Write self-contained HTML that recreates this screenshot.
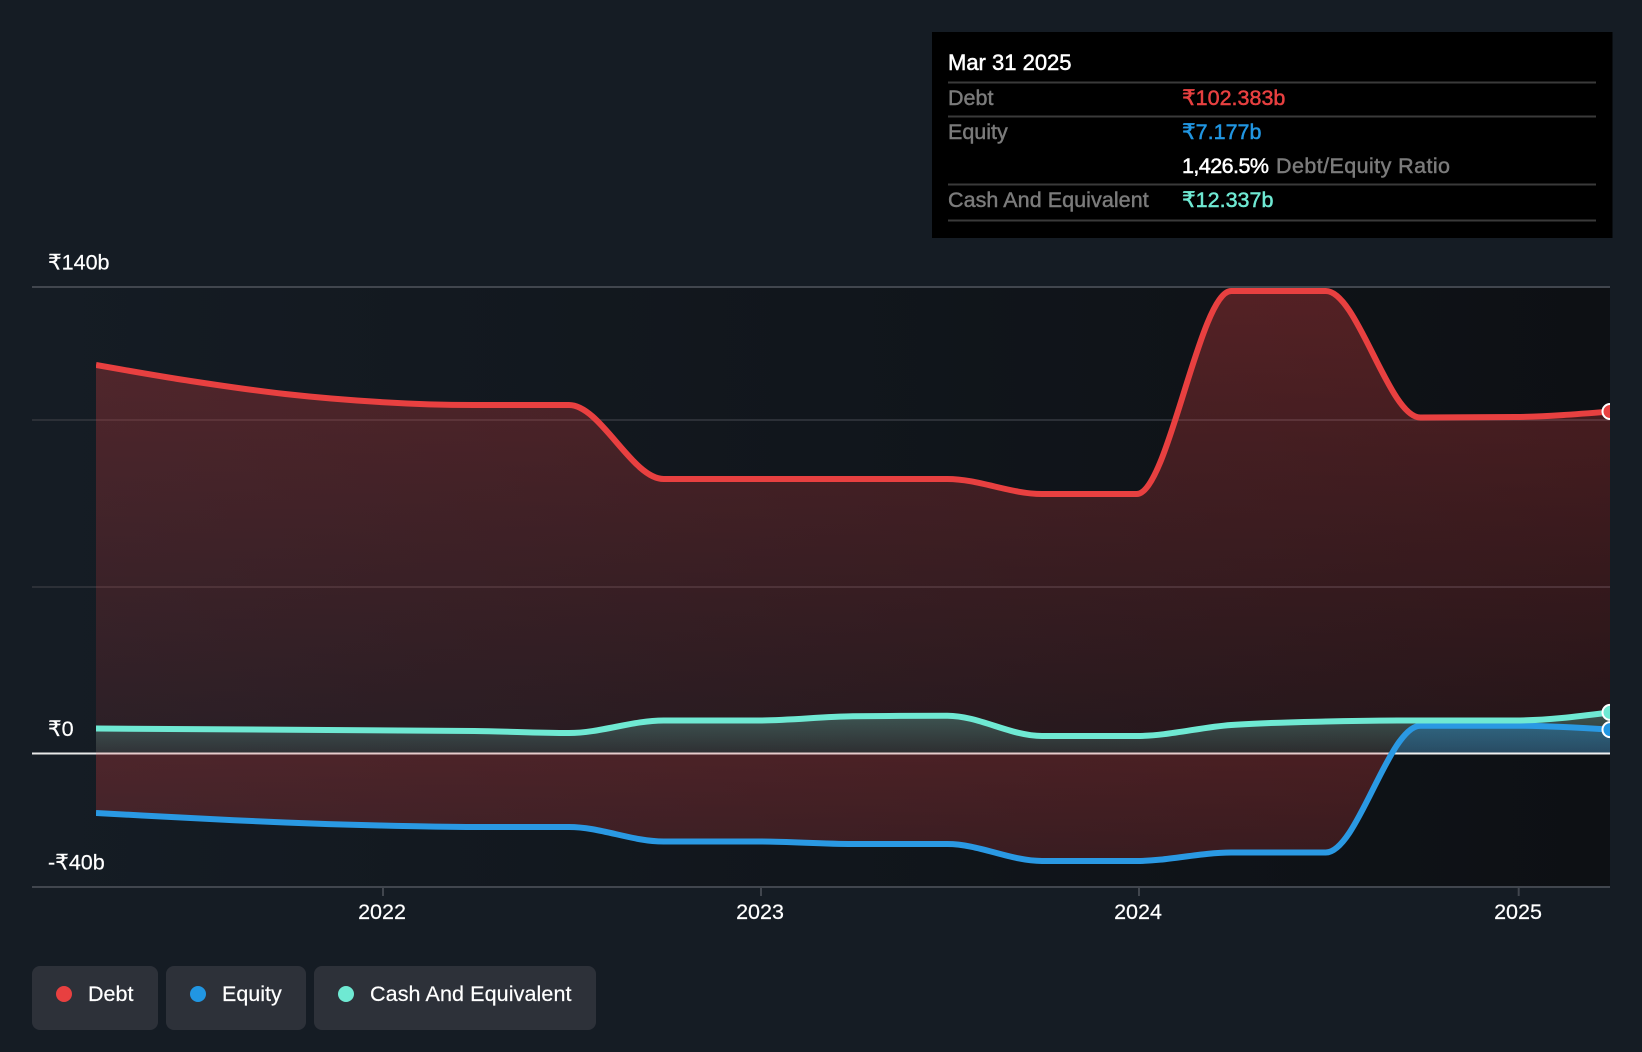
<!DOCTYPE html>
<html><head><meta charset="utf-8"><style>
html,body{margin:0;padding:0;background:#151c24;width:1642px;height:1052px;overflow:hidden}
svg{display:block}
text{font-family:"Liberation Sans","DejaVu Sans",sans-serif;font-size:21.5px;fill:#fff;paint-order:stroke}
.l{stroke:#fff;stroke-width:.2px}
.m{stroke-width:.5px}
.g{fill:#7b7b7b;stroke:#7b7b7b;stroke-width:.45px}
</style></head><body>
<svg width="1642" height="1052" viewBox="0 0 1642 1052" xmlns="http://www.w3.org/2000/svg">
<defs>
<linearGradient id="bgd" x1="0" x2="1" y1="0" y2="0"><stop offset="0" stop-color="#0d1014" stop-opacity="0"/><stop offset="1" stop-color="#0d1014"/></linearGradient>
<linearGradient id="r1" gradientUnits="userSpaceOnUse" x1="0" x2="0" y1="287" y2="753"><stop offset="0" stop-color="#e84040" stop-opacity=".32"/><stop offset="1" stop-color="#e84040" stop-opacity=".1"/></linearGradient>
<linearGradient id="r2" gradientUnits="userSpaceOnUse" x1="0" x2="0" y1="753" y2="887"><stop offset="0" stop-color="#e84040" stop-opacity=".27"/><stop offset="1" stop-color="#e84040" stop-opacity=".17"/></linearGradient>
<linearGradient id="c1" gradientUnits="userSpaceOnUse" x1="0" x2="0" y1="712" y2="753"><stop offset="0" stop-color="#6ee7d2" stop-opacity=".3"/><stop offset="1" stop-color="#6ee7d2" stop-opacity=".1"/></linearGradient>
<linearGradient id="b1" gradientUnits="userSpaceOnUse" x1="0" x2="0" y1="720" y2="753"><stop offset="0" stop-color="#2196e2" stop-opacity=".38"/><stop offset="1" stop-color="#2196e2" stop-opacity=".3"/></linearGradient>
<clipPath id="plot"><rect x="96" y="280" width="1514" height="610"/></clipPath>
<clipPath id="above"><rect x="0" y="280" width="1642" height="473"/></clipPath>
<clipPath id="below"><rect x="0" y="753" width="1642" height="140"/></clipPath>
</defs>
<rect x="32" y="287" width="1578" height="600" fill="url(#bgd)"/>
<g stroke-width="2" fill="none">
<line x1="32" x2="1610" y1="287" y2="287" stroke="#41464e"/>
<line x1="32" x2="1610" y1="420" y2="420" stroke="#2c3037"/>
<line x1="32" x2="1610" y1="587" y2="587" stroke="#2c3037"/>
<line x1="32" x2="1610" y1="887" y2="887" stroke="#41464e"/>
<line x1="383" x2="383" y1="887" y2="896" stroke="#41464e"/>
<line x1="761" x2="761" y1="887" y2="896" stroke="#41464e"/>
<line x1="1139" x2="1139" y1="887" y2="896" stroke="#41464e"/>
<line x1="1518.7" x2="1518.7" y1="887" y2="896" stroke="#41464e"/>
</g>
<g clip-path="url(#plot)">
<path clip-path="url(#above)" fill="url(#r1)" d="M96,365 C127.5,370.6 159.1,376.2 190.6,381 C222.1,385.8 253.7,390.5 285.2,394 C316.7,397.5 348.3,400.1 379.8,402 C411.3,403.9 442.9,405 474.4,405 L569,405 C600.5,405 632.1,479 663.6,479 L947.4,479 C978.9,479 1010.5,494 1042,494 L1136.6,494 C1168.1,494 1199.7,291 1231.2,291 L1325.8,291 C1357.3,291 1388.9,417.5 1420.4,417.5 C1452,417.5 1483.6,417.3 1515,417 C1546.6,416.7 1578.2,414.1 1610,411.5 L1610,753 L96,753 Z"/>
<path clip-path="url(#below)" fill="url(#r2)" d="M96,753 L96,813 C127.5,814.7 159.1,816.4 190.6,818 C222.1,819.6 253.7,821.25 285.2,822.5 C316.7,823.75 348.3,824.75 379.8,825.5 C411.3,826.25 442.9,827 474.4,827 L569,827 C600.5,827 632.1,841.5 663.6,841.5 L758.2,841.5 C789.7,841.5 821.3,844 852.8,844 L947.4,844 C978.9,844 1010.5,861 1042,861 L1136.6,861 C1168.1,861 1199.7,852.5 1231.2,852.5 L1325.8,852.5 C1357.3,852.5 1388.9,725.7 1420.4,725.7 L1420.4,753 Z"/>
<path fill="url(#c1)" d="M96,728.5 L474.4,731 C505.9,731.3 537.5,733 569,733 C600.5,733 632.1,720.5 663.6,720.5 L758.2,720.5 C789.7,720.5 821.3,716.7 852.8,716.3 C884.3,715.9 915.9,715.7 947.4,715.7 C978.9,715.7 1010.5,736 1042,736 L1136.6,736 C1168.1,736 1199.7,727.3 1231.2,725 C1262.7,722.7 1294.3,722.2 1325.8,721.5 C1357.3,720.8 1388.9,720.5 1420.4,720.5 L1515,720.5 C1546.5,720.5 1578.1,716.45 1610,712.4 L1610,753 L96,753 Z"/>
<path clip-path="url(#above)" fill="url(#b1)" d="M1325.8,852.5 C1357.3,852.5 1388.9,725.7 1420.4,725.7 L1515,725.7 C1546.5,725.7 1578.1,727.65 1610,729.6 L1610,900 L1325.8,900 Z"/>
</g>
<line x1="32" x2="96" y1="753.5" y2="753.5" stroke="#e8e8e8" stroke-width="2"/>
<line x1="96" x2="1389" y1="753.5" y2="753.5" stroke="#e6cccc" stroke-width="2"/>
<line x1="1389" x2="1610" y1="753.5" y2="753.5" stroke="#f0f0f0" stroke-width="2"/>
<g clip-path="url(#plot)" fill="none" stroke-width="6">
<path stroke="#e84040" d="M96,365 C127.5,370.6 159.1,376.2 190.6,381 C222.1,385.8 253.7,390.5 285.2,394 C316.7,397.5 348.3,400.1 379.8,402 C411.3,403.9 442.9,405 474.4,405 L569,405 C600.5,405 632.1,479 663.6,479 L947.4,479 C978.9,479 1010.5,494 1042,494 L1136.6,494 C1168.1,494 1199.7,291 1231.2,291 L1325.8,291 C1357.3,291 1388.9,417.5 1420.4,417.5 C1452,417.5 1483.6,417.3 1515,417 C1546.6,416.7 1578.2,414.1 1610,411.5"/>
<path stroke="#2a99e3" d="M96,813 C127.5,814.7 159.1,816.4 190.6,818 C222.1,819.6 253.7,821.25 285.2,822.5 C316.7,823.75 348.3,824.75 379.8,825.5 C411.3,826.25 442.9,827 474.4,827 L569,827 C600.5,827 632.1,841.5 663.6,841.5 L758.2,841.5 C789.7,841.5 821.3,844 852.8,844 L947.4,844 C978.9,844 1010.5,861 1042,861 L1136.6,861 C1168.1,861 1199.7,852.5 1231.2,852.5 L1325.8,852.5 C1357.3,852.5 1388.9,725.7 1420.4,725.7 L1515,725.7 C1546.5,725.7 1578.1,727.65 1610,729.6"/>
<path stroke="#6fe9d3" d="M96,728.5 L474.4,731 C505.9,731.3 537.5,733 569,733 C600.5,733 632.1,720.5 663.6,720.5 L758.2,720.5 C789.7,720.5 821.3,716.7 852.8,716.3 C884.3,715.9 915.9,715.7 947.4,715.7 C978.9,715.7 1010.5,736 1042,736 L1136.6,736 C1168.1,736 1199.7,727.3 1231.2,725 C1262.7,722.7 1294.3,722.2 1325.8,721.5 C1357.3,720.8 1388.9,720.5 1420.4,720.5 L1515,720.5 C1546.5,720.5 1578.1,716.45 1610,712.4"/>
<circle cx="1610" cy="411.5" r="7.5" fill="#e84040" stroke="#fff" stroke-width="2"/>
<circle cx="1610" cy="729.6" r="7.5" fill="#2196e2" stroke="#fff" stroke-width="2"/>
<circle cx="1610" cy="712.4" r="7.5" fill="#6fe9d3" stroke="#fff" stroke-width="2"/>
</g>
<text x="48" y="269.500" class="l">₹140b</text>
<text x="48" y="736" class="l">₹0</text>
<text x="48" y="869.500" class="l">-₹40b</text>
<text x="382" y="919" text-anchor="middle" class="l">2022</text>
<text x="760" y="919" text-anchor="middle" class="l">2023</text>
<text x="1138" y="919" text-anchor="middle" class="l">2024</text>
<text x="1518" y="919" text-anchor="middle" class="l">2025</text>
<rect x="932" y="32" width="680.500" height="206" fill="#000"/>
<g stroke="#3a3a3a" stroke-width="2">
<line x1="948" x2="1596" y1="82.500" y2="82.500"/>
<line x1="948" x2="1596" y1="116.500" y2="116.500"/>
<line x1="948" x2="1596" y1="184.500" y2="184.500"/>
<line x1="948" x2="1596" y1="220.500" y2="220.500"/>
</g>
<text x="948" y="70" class="m" style="font-size:22px;stroke:#fff">Mar 31 2025</text>
<text x="948" y="105" class="g">Debt</text>
<text x="1182" y="105" class="m" style="fill:#e84040;stroke:#e84040">₹102.383b</text>
<text x="948" y="139" class="g">Equity</text>
<text x="1182" y="139" class="m" style="fill:#2196e2;stroke:#2196e2">₹7.177b</text>
<text x="1182" y="173" class="m" style="stroke:#fff" textLength="87">1,426.5%</text>
<text x="1276" y="173" class="g" textLength="174">Debt/Equity Ratio</text>
<text x="948" y="207" class="g" textLength="200.700">Cash And Equivalent</text>
<text x="1182" y="207" class="m" style="fill:#6fe9d3;stroke:#6fe9d3">₹12.337b</text>
<rect x="32" y="966" width="126" height="64" rx="8" fill="#2d3139"/>
<rect x="166" y="966" width="140" height="64" rx="8" fill="#2d3139"/>
<rect x="314" y="966" width="282" height="64" rx="8" fill="#2d3139"/>
<circle cx="64" cy="994" r="8" fill="#e84040"/>
<circle cx="198" cy="994" r="8" fill="#2196e2"/>
<circle cx="346" cy="994" r="8" fill="#6fe9d3"/>
<text x="88" y="1001" class="l">Debt</text>
<text x="222" y="1001" class="l">Equity</text>
<text x="370" y="1001" class="l" textLength="201.500">Cash And Equivalent</text>
</svg>
</body></html>
